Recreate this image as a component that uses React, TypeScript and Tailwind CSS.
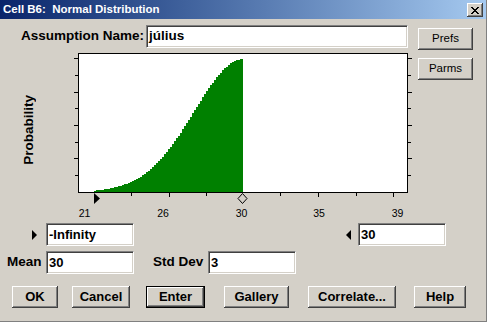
import React from "react";

const raised =
  "bg-[#d4d0c8] shadow-[inset_-1px_-1px_0_#404040,inset_1px_1px_0_#ffffff,inset_-2px_-2px_0_#808080,inset_2px_2px_0_#d4d0c8]";
const sunken =
  "bg-white border border-t-[#808080] border-l-[#808080] border-b-white border-r-white shadow-[inset_1px_1px_0_#404040,inset_-1px_-1px_0_#d4d0c8]";

// normal pdf, mean 30, sd 3, shaded from 21 up to the mean
const buildCurve = () => {
  const base = 192;
  const pts: string[] = [`94,${base}`];
  for (let px = 94; px < 243; px += 2) {
    const v = 21 + ((px - 94) * 9) / 149;
    const h = Math.round(133 * Math.exp(-((v - 30) ** 2) / 18));
    pts.push(`${px},${base - h}`, `${Math.min(px + 2, 243)},${base - h}`);
  }
  pts.push(`243,${base}`);
  return pts.join(" ");
};

const yTicks = [58, 75, 92, 108, 125, 142, 158, 175];
const xTicks = [
  { x: 131, major: false },
  { x: 169, major: true },
  { x: 206, major: false },
  { x: 280, major: false },
  { x: 318, major: true },
  { x: 356, major: false },
  { x: 393, major: true },
];
const xLabels = [
  { x: 84.5, t: "21" },
  { x: 163, t: "26" },
  { x: 241.5, t: "30" },
  { x: 319, t: "35" },
  { x: 397.5, t: "39" },
];

const Chart = () => (
  <svg width={345} height={170} viewBox="70 50 345 170" shapeRendering="crispEdges">
    <rect x={78} y={53} width={330} height={140} fill="#ffffff" />
    <polygon points={buildCurve()} fill="#008000" />
    <g stroke="#000" strokeWidth={1}>
      <line x1={78} y1={53.5} x2={408} y2={53.5} />
      <line x1={78.5} y1={53} x2={78.5} y2={193} />
      <line x1={407.5} y1={53} x2={407.5} y2={193} />
      <line x1={78} y1={192.5} x2={408} y2={192.5} />
      {yTicks.map((y, i) => (
        <g key={y}>
          <line x1={i % 2 === 0 ? 74 : 75} y1={y + 0.5} x2={78} y2={y + 0.5} />
          <line x1={408} y1={y + 0.5} x2={i % 2 === 0 ? 412 : 411} y2={y + 0.5} />
        </g>
      ))}
      {xTicks.map((t) => (
        <line key={t.x} x1={t.x + 0.5} y1={193} x2={t.x + 0.5} y2={t.major ? 197 : 196} />
      ))}
    </g>
    <polygon points="94,193 100,198.5 94,204" fill="#000" shapeRendering="auto" />
    <polygon
      points="242.5,193.5 247,198.5 242.5,203.5 238,198.5"
      fill="none"
      stroke="#000"
      strokeWidth={1}
      shapeRendering="auto"
    />
    {xLabels.map((l) => (
      <text
        key={l.t}
        x={l.x}
        y={217}
        textAnchor="middle"
        fontSize="10.5"
        fontFamily="'Liberation Sans', Arial, sans-serif"
        fill="#000"
      >
        {l.t}
      </text>
    ))}
  </svg>
);

const Field = ({ value, width }: { value: string; width: string }) => (
  <div className={`${sunken} ${width} h-[23px] flex items-center pl-[2px] text-[13px] font-bold text-black`}>
    {value}
  </div>
);

const Button = ({
  label,
  width,
  bold = true,
  isDefault = false,
  className = "",
}: {
  label: string;
  width: string;
  bold?: boolean;
  isDefault?: boolean;
  className?: string;
}) => (
  <div
    className={`${width} h-[22px] ${isDefault ? "border border-black" : ""} ${className}`}
  >
    <div
      className={`${raised} h-full w-full flex items-center justify-center text-black ${
        bold ? "text-[13px] font-bold" : "text-[11.5px]"
      }`}
    >
      {label}
    </div>
  </div>
);

const Arrow = ({ dir }: { dir: "right" | "left" }) => (
  <svg width={6} height={10} viewBox="0 0 6 10">
    {dir === "right" ? (
      <polygon points="0,0 5,5 0,10" fill="#000" />
    ) : (
      <polygon points="6,0 1,5 6,10" fill="#000" />
    )}
  </svg>
);

export default function App() {
  return (
    <div className="w-[487px] h-[322px] bg-[#d4d0c8] flex flex-col border-r border-b border-r-[#808080] border-b-[#808080] font-['Liberation_Sans',Arial,sans-serif] overflow-hidden">
      {/* title bar */}
      <div className="h-[19px] shrink-0 flex items-center justify-between pl-[3px] pr-[3px] bg-gradient-to-r from-[#0a246a] to-[#a6caf0]">
        <span className="text-white font-bold text-[11.5px] leading-none whitespace-pre">
          Cell B6:  Normal Distribution
        </span>
        <div className={`${raised} w-[16px] h-[14px] flex items-center justify-center mt-[1px]`}>
          <svg width={8} height={7} viewBox="0 0 8 7" shapeRendering="crispEdges">
            <path
              d="M0 0h2v1h-2zM6 0h2v1h-2zM1 1h2v1h-2zM5 1h2v1h-2zM2 2h4v1h-4zM3 3h2v1h-2zM2 4h4v1h-4zM1 5h2v1h-2zM5 5h2v1h-2zM0 6h2v1h-2zM6 6h2v1h-2z"
              fill="#000"
            />
          </svg>
        </div>
      </div>

      <div className="flex">
        <div className="w-[415px] flex flex-col">
          <div className="mt-[6px] h-[23px] flex items-center">
            <div className="w-[146px] pr-[2px] text-right text-[13.5px] font-bold text-black">
              Assumption Name:
            </div>
            <div className={`${sunken} w-[262px] h-[23px] flex items-center pl-[2px] text-[13.5px] font-bold text-black`}>
              július
            </div>
          </div>
          <div className="mt-[2px] flex">
            <div className="w-[70px] h-[160px] flex items-center pl-[21px]">
              <span className="[writing-mode:vertical-rl] rotate-180 text-[13.5px] font-bold leading-[16px] text-black">
                Probability
              </span>
            </div>
            <Chart />
          </div>
        </div>
        <div className="pl-[3px] flex flex-col">
          <Button label="Prefs" width="w-[55px]" bold={false} className="mt-[9px] h-[20px]" />
          <Button label="Parms" width="w-[55px]" bold={false} className="mt-[8px] h-[20px]" />
        </div>
      </div>

      <div className="mt-[3px] h-[23px] flex items-center">
        <div className="ml-[32px]">
          <Arrow dir="right" />
        </div>
        <div className="ml-[8px]">
          <Field value="-Infinity" width="w-[88px]" />
        </div>
        <div className="ml-[211px]">
          <Arrow dir="left" />
        </div>
        <div className="ml-[7px]">
          <Field value="30" width="w-[88px]" />
        </div>
      </div>

      <div className="mt-[5px] h-[23px] flex items-center">
        <div className="pl-[7px] w-[46px] text-[13.5px] font-bold text-black">Mean</div>
        <Field value="30" width="w-[88px]" />
        <div className="ml-[19px] w-[55px] text-[13.5px] font-bold text-black">Std Dev</div>
        <Field value="3" width="w-[88px]" />
      </div>

      <div className="mt-[12px] flex pl-[12px]">
        <Button label="OK" width="w-[46px]" />
        <Button label="Cancel" width="w-[58px]" className="ml-[14px]" />
        <Button label="Enter" width="w-[59px]" isDefault className="ml-[16px]" />
        <Button label="Gallery" width="w-[65px]" className="ml-[19px]" />
        <Button label="Correlate..." width="w-[88px]" className="ml-[19px]" />
        <Button label="Help" width="w-[52px]" className="ml-[18px]" />
      </div>
    </div>
  );
}
